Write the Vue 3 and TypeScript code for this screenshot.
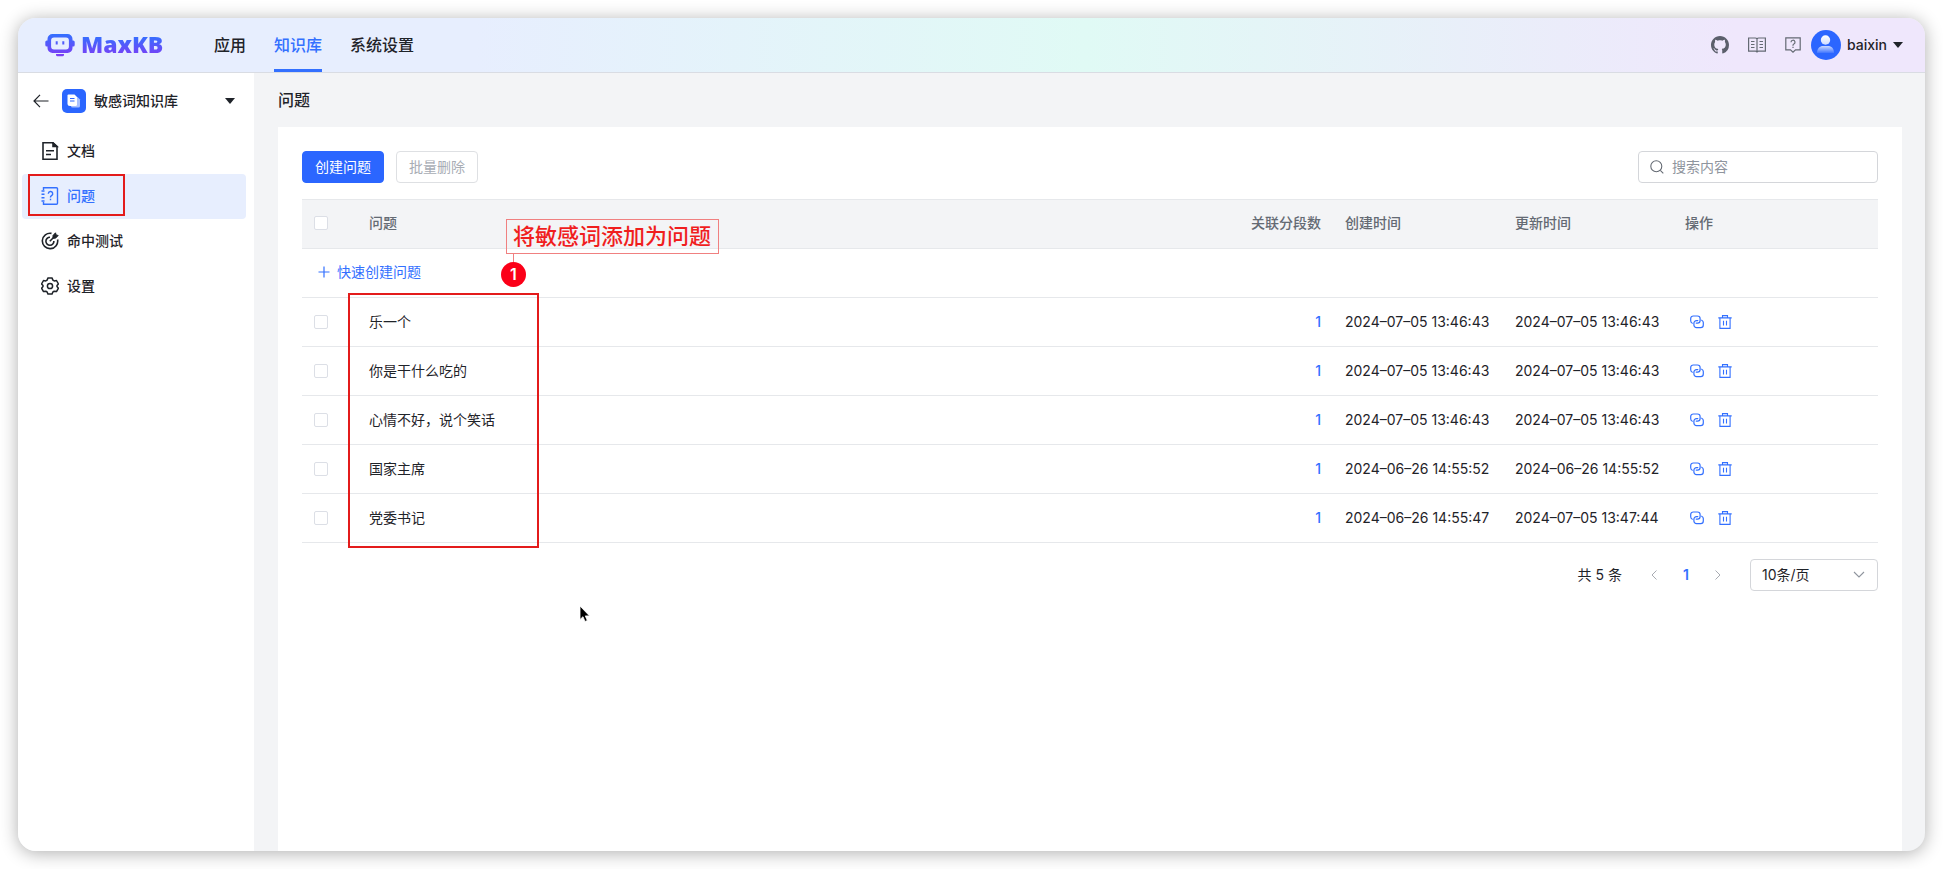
<script setup lang="ts">
import { ref } from 'vue'

interface Question {
  id: number
  content: string
  count: number
  created: string
  updated: string
}

const topMenu = ['应用', '知识库', '系统设置']
const activeTop = '知识库'

const sideMenu = [
  { key: 'doc', label: '文档' },
  { key: 'problem', label: '问题' },
  { key: 'hit', label: '命中测试' },
  { key: 'setting', label: '设置' },
]
const activeSide = 'problem'

const keyword = ref('')
const pageSize = ref(10)
const checked = ref<number[]>([])

const questions: Question[] = [
  { id: 1, content: '乐一个', count: 1, created: '2024–07–05 13:46:43', updated: '2024–07–05 13:46:43' },
  { id: 2, content: '你是干什么吃的', count: 1, created: '2024–07–05 13:46:43', updated: '2024–07–05 13:46:43' },
  { id: 3, content: '心情不好，说个笑话', count: 1, created: '2024–07–05 13:46:43', updated: '2024–07–05 13:46:43' },
  { id: 4, content: '国家主席', count: 1, created: '2024–06–26 14:55:52', updated: '2024–06–26 14:55:52' },
  { id: 5, content: '党委书记', count: 1, created: '2024–06–26 14:55:47', updated: '2024–07–05 13:47:44' },
]
</script>

<template>
  <div class="stage">
    <div class="window">
      <header class="topbar">
        <a class="logo" href="#">
          <svg width="30" height="23" viewBox="0 0 30 23" aria-hidden="true">
            <defs>
              <linearGradient id="brand" x1="0" y1="0" x2="0" y2="1">
                <stop offset="0" stop-color="#3370ff" />
                <stop offset="1" stop-color="#7f3bf5" />
              </linearGradient>
            </defs>
            <path
              fill="url(#brand)"
              fill-rule="evenodd"
              d="M7.500 0h15A5 5 0 0 1 27.500 5v1.500h.7a1.500 1.500 0 0 1 1.500 1.500v3a1.500 1.500 0 0 1-1.500 1.500h-.7V14a5 5 0 0 1-5 5h-15a5 5 0 0 1-5-5v-1.500h-.7A1.500 1.500 0 0 1 .3 11V8a1.500 1.500 0 0 1 1.500-1.500h.7V5a5 5 0 0 1 5-5zM9 3.600A2.900 2.900 0 0 0 6.100 6.500v6A2.900 2.900 0 0 0 9 15.400h12a2.900 2.900 0 0 0 2.900-2.900v-6A2.900 2.900 0 0 0 21 3.600zM10.700 7.200h2v3.400h-2zM17.300 7.200h2v3.400h-2zM11 20h8v.8a1.500 1.500 0 0 1-1.500 1.500h-5a1.500 1.500 0 0 1-1.500-1.500z"
            />
          </svg>
          <span>MaxKB</span>
        </a>
        <nav class="top-nav">
          <a v-for="m in topMenu" :key="m" href="#" :class="{ active: m === activeTop }">{{ m }}</a>
        </nav>
        <div class="tools">
          <button type="button" aria-label="GitHub">
            <svg width="18" height="18" viewBox="0 0 16 16" fill="#5b5f6b">
              <path
                d="M8 0C3.580 0 0 3.580 0 8c0 3.540 2.290 6.530 5.470 7.590.4.070.55-.17.55-.38 0-.19-.01-.82-.01-1.490-2.010.37-2.530-.49-2.690-.94-.09-.23-.48-.94-.82-1.130-.28-.15-.68-.52-.01-.53.63-.01 1.080.58 1.230.82.72 1.210 1.870.87 2.330.66.070-.52.28-.87.51-1.070-1.780-.2-3.640-.89-3.640-3.950 0-.87.31-1.590.82-2.150-.08-.2-.36-1.020.08-2.120 0 0 .67-.21 2.200.82.64-.18 1.320-.27 2-.27s1.360.09 2 .27c1.530-1.040 2.200-.82 2.200-.82.44 1.100.16 1.920.08 2.120.51.56.82 1.270.82 2.150 0 3.070-1.870 3.750-3.650 3.950.29.25.54.73.54 1.480 0 1.070-.01 1.930-.01 2.200 0 .21.15.46.55.38A8.010 8.010 0 0 0 16 8c0-4.420-3.580-8-8-8z"
              />
            </svg>
          </button>
          <button type="button" aria-label="使用手册">
            <svg width="20" height="16" viewBox="0 0 20 16" fill="none" stroke="#646a73" stroke-width="1.200">
              <path d="M10 1.800C9.600 1.200 9 1 8.300 1H1.600v13.200h6.900c.7 0 1.200.3 1.500.7.3-.4.8-.7 1.500-.7h6.900V1h-6.700c-.7 0-1.300.2-1.700.8zM10 2v12.500M4 4.500h3.500M4 7.500h3.500M4 10.500h3.500M12.500 4.500H16M12.500 7.500H16M12.500 10.500H16" />
            </svg>
          </button>
          <button type="button" aria-label="帮助">
            <svg width="16" height="16" viewBox="0 0 16 16" fill="none" stroke="#646a73" stroke-width="1.200">
              <path d="M.8.800h14.400v12h-4.700L8 15.200l-2.500-2.400H.8z" />
              <path d="M6 5.200a2 2 0 1 1 2.900 1.800c-.6.3-.9.700-.9 1.300v.4M8 9.700V11" />
            </svg>
          </button>
        </div>
        <button type="button" class="user">
          <svg width="30" height="30" viewBox="0 0 30 30" aria-hidden="true">
            <defs>
              <linearGradient id="body" x1="0" y1="0" x2="0" y2="1">
                <stop offset="0" stop-color="#fff" stop-opacity=".75" />
                <stop offset="1" stop-color="#fff" stop-opacity=".1" />
              </linearGradient>
              <linearGradient id="head" x1="0" y1="0" x2="0" y2="1">
                <stop offset="0" stop-color="#fff" />
                <stop offset="1" stop-color="#cfdcff" />
              </linearGradient>
            </defs>
            <circle cx="15" cy="15" r="15" fill="#2b66ff" />
            <circle cx="14.500" cy="10" r="4.700" fill="url(#head)" />
            <path d="M6 23c0-4.500 3-7 6-7h5c3.500 0 6 2.500 6 7z" fill="url(#body)" />
          </svg>
          <span>baixin</span>
          <i class="caret"></i>
        </button>
      </header>

      <div class="body">
        <aside class="sidebar">
          <div class="kb">
            <button type="button" class="back" aria-label="返回">
              <svg width="16" height="14" viewBox="0 0 16 14" fill="none" stroke="#1f2329" stroke-width="1.200">
                <path d="M15.500 7H1M7 .8 1 7l6 6.200" />
              </svg>
            </button>
            <button type="button" class="kb-select">
              <svg width="24" height="24" viewBox="0 0 24 24" aria-hidden="true">
                <rect width="24" height="24" rx="5" fill="#2b66ff" />
                <path d="M12 8h3.500L18 10.500V17a1.500 1.500 0 0 1-1.500 1.500h-6A1.500 1.500 0 0 1 9 17z" fill="#a9c1ff" />
                <path d="M6.500 5.500h6L15 8v7.500a1.500 1.500 0 0 1-1.500 1.500H8a2.500 2.500 0 0 1-2.500-2.500v-8a1 1 0 0 1 1-1z" fill="#fff" />
                <path d="M8 9.500h4.500M8 12h4.500" stroke="#2b66ff" />
              </svg>
              <span>敏感词知识库</span>
              <i class="caret"></i>
            </button>
          </div>
          <nav class="side-nav">
            <a v-for="m in sideMenu" :key="m.key" href="#" :class="{ active: m.key === activeSide }">
              <svg v-if="m.key === 'doc'" width="18" height="18" viewBox="0 0 18 18" fill="none" stroke="currentColor" stroke-width="1.600">
                <path d="M2 .8h9.800L16 4.500v12.700H2zM5 8.800h8M5 12.500h5" />
                <path d="M12 .8v3.700h4z" fill="currentColor" />
              </svg>
              <svg v-else-if="m.key === 'problem'" width="18" height="18" viewBox="0 0 18 18" fill="none" stroke="currentColor" stroke-width="1.400">
                <path d="M2.500 3V.8h13a1 1 0 0 1 1 1v14.400a1 1 0 0 1-1 1h-13V15M.5 4h3M.5 7.300h3M.5 10.700h3M.5 14h3" />
                <path d="M7.300 6.700a2.200 2.200 0 1 1 3.200 2c-.7.4-1 .7-1 1.400v.4M9.500 11.700v1.500" />
              </svg>
              <svg v-else-if="m.key === 'hit'" width="18" height="18" viewBox="0 0 18 18" fill="none" stroke="currentColor" stroke-width="1.600">
                <path d="M10.500 1.400A7.700 7.700 0 1 0 16.600 7.500" />
                <path d="M9 5.200A4 4 0 1 0 12.900 9M8.800 9.200l4-4" />
                <path d="m12 3.500 2.500-2.700.6 2.100 2.100.6-2.700 2.700h-2.500z" fill="currentColor" stroke-width="1" />
              </svg>
              <svg v-else width="18" height="18" viewBox="0 0 18 18" fill="none" stroke="currentColor" stroke-width="1.500" stroke-linejoin="round">
                <path d="M7 .9h4l.9 2.200 1.300.8 2.300-.4 1.900 3.400L16 8.600v.9l1.400 1.700-1.900 3.400-2.300-.4-1.300.8-.9 2.100H7l-.9-2.100-1.300-.8-2.300.4-1.900-3.400L2 9.500v-.9L.6 6.900l1.900-3.400 2.300.4 1.300-.8z" />
                <circle cx="9" cy="9" r="2.600" />
              </svg>
              <span>{{ m.label }}</span>
              <b v-if="m.key === activeSide" class="mark"></b>
            </a>
          </nav>
        </aside>

        <main class="main">
          <h1>问题</h1>
          <section class="card">
            <div class="toolbar">
              <button type="button" class="btn primary">创建问题</button>
              <button type="button" class="btn" disabled>批量删除</button>
              <label class="search">
                <svg width="14" height="14" viewBox="0 0 14 14" fill="none" stroke="#646a73" stroke-width="1.100">
                  <circle cx="6.300" cy="6.300" r="5.500" />
                  <path d="m10.300 10.300 3 3" />
                </svg>
                <input v-model="keyword" type="text" placeholder="搜索内容" aria-label="搜索内容" />
              </label>
            </div>

            <div class="table-wrap">
              <table>
                <colgroup>
                  <col class="c-check" />
                  <col />
                  <col class="c-count" />
                  <col class="c-time" />
                  <col class="c-time" />
                  <col class="c-ops" />
                </colgroup>
                <thead>
                  <tr>
                    <th><input type="checkbox" aria-label="全选" /></th>
                    <th>问题</th>
                    <th class="right">关联分段数</th>
                    <th>创建时间</th>
                    <th>更新时间</th>
                    <th>操作</th>
                  </tr>
                </thead>
                <tbody>
                  <tr>
                    <td colspan="6">
                      <button type="button" class="quick">
                        <svg width="12" height="12" viewBox="0 0 12 12" stroke="currentColor" stroke-width="1.200">
                          <path d="M6 .5v11M.5 6h11" />
                        </svg>
                        快速创建问题
                      </button>
                    </td>
                  </tr>
                  <tr v-for="q in questions" :key="q.id">
                    <td><input v-model="checked" type="checkbox" :value="q.id" :aria-label="q.content" /></td>
                    <td>{{ q.content }}</td>
                    <td class="right"><a href="#" class="count">{{ q.count }}</a></td>
                    <td>{{ q.created }}</td>
                    <td>{{ q.updated }}</td>
                    <td>
                      <div class="ops">
                        <button type="button" aria-label="关联分段">
                          <svg width="14" height="14" viewBox="0 0 14 14" fill="none" stroke="currentColor" stroke-width="1.200" stroke-linecap="round">
                            <path d="M2.300 8.200A2.600 2.600 0 0 1 .7 5.800V3.600A2.600 2.600 0 0 1 3.300 1h4.200a2.600 2.600 0 0 1 2.600 2.600v1.900a2.600 2.600 0 0 1-2.600 2.600H6.200" />
                            <path d="M11.700 5.200a2.600 2.600 0 0 1 1.600 2.400v2.500a2.600 2.600 0 0 1-2.600 2.600H6.500a2.600 2.600 0 0 1-2.600-2.600V8.200a2.600 2.600 0 0 1 2.600-2.600h1.300" />
                          </svg>
                        </button>
                        <button type="button" aria-label="删除">
                          <svg width="14" height="14" viewBox="0 0 14 14" fill="none" stroke="currentColor" stroke-width="1.100">
                            <path d="M.3 2.900h13.400M4.500 2.700V.6h5v2.100M1.900 3v10.400h10.200V3M5.500 5.800v4.700M8.500 5.800v4.700" />
                          </svg>
                        </button>
                      </div>
                    </td>
                  </tr>
                </tbody>
              </table>
              <div class="frame"></div>
              <div class="note">将敏感词添加为问题</div>
              <div class="stem"></div>
              <div class="step">1</div>
              <svg class="pointer" width="12" height="18" viewBox="0 0 12 18">
                <path d="M1 1v13.500l3-2.800 2 4.800 2.300-1-2-4.600h4.200z" fill="#000" stroke="#fff" stroke-width=".8" />
              </svg>
            </div>

            <div class="pager">
              <span>共 5 条</span>
              <div class="pages">
                <button type="button" aria-label="上一页" disabled>
                  <svg width="6" height="10" viewBox="0 0 6 10" fill="none" stroke="currentColor"><path d="M5.500.5 1 5l4.500 4.500" /></svg>
                </button>
                <button type="button" class="current">1</button>
                <button type="button" aria-label="下一页" disabled>
                  <svg width="6" height="10" viewBox="0 0 6 10" fill="none" stroke="currentColor"><path d="M.5.5 5 5 .5 9.500" /></svg>
                </button>
              </div>
              <label class="size">
                <select v-model="pageSize" aria-label="每页条数">
                  <option :value="10">10条/页</option>
                  <option :value="20">20条/页</option>
                  <option :value="50">50条/页</option>
                </select>
                <svg width="12" height="8" viewBox="0 0 12 8" fill="none" stroke="#8f959e" stroke-width="1.100"><path d="m1 1 5 5 5-5" /></svg>
              </label>
            </div>
          </section>
        </main>
      </div>
    </div>
  </div>
</template>

<style>
body {
  margin: 0;
  background: #fff;
}
</style>

<style scoped>
* {
  box-sizing: border-box;
}
.stage {
  display: flex;
  height: 100vh;
  padding: 18px;
  font: 14px/22px Inter, 'Noto Sans CJK SC', sans-serif;
  color: #1f2329;
}
button,
input,
select {
  font: inherit;
  color: inherit;
}
button {
  padding: 0;
  border: 0;
  background: none;
}
a {
  color: inherit;
  text-decoration: none;
}
svg {
  display: block;
  flex: none;
}
.window {
  flex: 1;
  display: flex;
  flex-direction: column;
  overflow: hidden;
  border-radius: 18px;
  background: #f3f4f6;
  box-shadow: 0 2px 18px rgba(0, 0, 0, 0.32);
}
.topbar {
  display: flex;
  align-items: stretch;
  height: 55px;
  padding: 0 22px 0 27px;
  border-bottom: 1px solid #d9dce3;
  background: linear-gradient(90deg, #e7eefe 24%, #e0faf5 56%, #efe7fc 90%);
}
.logo {
  display: flex;
  align-items: center;
  gap: 6px;
  width: 169px;
}
.logo span {
  padding-bottom: 2px;
  font: 800 23px/28px 'Open Sans', sans-serif;
  background: linear-gradient(#3370ff 20%, #7f3bf5 90%);
  background-clip: text;
  color: transparent;
}
.top-nav {
  display: flex;
  gap: 28px;
  flex: 1;
  font-size: 16px;
  font-weight: 500;
}
.top-nav a {
  display: flex;
  align-items: center;
  border-bottom: 3px solid transparent;
  border-top: 3px solid transparent;
}
.top-nav .active {
  color: #3370ff;
  border-bottom-color: #3370ff;
}
.tools {
  display: flex;
  align-items: center;
  gap: 18px;
  margin-right: 10px;
}
.user {
  display: flex;
  align-items: center;
  gap: 6px;
  font-weight: 500;
}
.caret {
  border: 5px solid transparent;
  border-top: 6px solid #1f2329;
  border-bottom: 0;
}
.body {
  display: flex;
  flex: 1;
}
.sidebar {
  width: 236px;
  padding: 16px 8px 0 4px;
  background: #fff;
}
.kb {
  display: flex;
  align-items: center;
  gap: 13px;
  padding: 0 11px;
  font-weight: 500;
}
.kb-select {
  display: flex;
  align-items: center;
  gap: 8px;
  flex: 1;
}
.kb-select .caret {
  margin-left: auto;
}
.side-nav {
  margin-top: 16px;
  font-weight: 500;
}
.side-nav a {
  position: relative;
  display: flex;
  align-items: center;
  gap: 8px;
  height: 45px;
  padding: 0 0 2px 19px;
  border-radius: 4px;
}
.side-nav .active {
  color: #3370ff;
  background: #e7eefe;
}
.mark {
  position: absolute;
  left: 6px;
  top: 0;
  width: 97px;
  height: 42px;
  border: 2px solid #e31b1b;
}
.main {
  flex: 1;
  display: flex;
  flex-direction: column;
  padding: 0 23px 0 24px;
}
h1 {
  margin: 15px 0;
  font-size: 16px;
  line-height: 24px;
  font-weight: 500;
}
.card {
  flex: 1;
  padding: 24px;
  background: #fff;
}
.toolbar {
  display: flex;
  gap: 12px;
  margin-bottom: 16px;
}
.btn {
  width: 82px;
  height: 32px;
  border: 1px solid #dee0e3;
  border-radius: 4px;
  color: #a8adb5;
  background: #fff;
}
.btn.primary {
  border-color: #2b66ff;
  color: #fff;
  background: #2b66ff;
}
.search {
  display: flex;
  align-items: center;
  gap: 8px;
  width: 240px;
  height: 32px;
  margin-left: auto;
  padding: 0 11px;
  border: 1px solid #d4d6da;
  border-radius: 4px;
}
.search input {
  flex: 1;
  min-width: 0;
  padding: 0;
  border: 0;
  outline: 0;
  background: none;
}
.search input::placeholder {
  color: #8f959e;
}
.table-wrap {
  position: relative;
}
table {
  width: 100%;
  table-layout: fixed;
  border-collapse: separate;
  border-spacing: 0;
}
.c-check {
  width: 55px;
}
.c-count {
  width: 100px;
}
.c-time {
  width: 170px;
}
.c-ops {
  width: 205px;
}
th,
td {
  height: 49px;
  padding: 0 12px;
  border-bottom: 1px solid #e6e8eb;
  text-align: left;
  white-space: nowrap;
}
th {
  height: 50px;
  padding-bottom: 2px;
  border-top: 1px solid #e6e8eb;
  font-weight: 500;
  color: #646a73;
  background: #f3f4f6;
}
.right {
  text-align: right;
}
input[type='checkbox'] {
  display: block;
  appearance: none;
  width: 14px;
  height: 14px;
  margin: 0;
  border: 1px solid #dcdfe6;
  border-radius: 2px;
  background: #fff;
}
.quick {
  display: flex;
  align-items: center;
  gap: 7px;
  padding: 0 0 2px 4px;
  color: #3370ff;
}
.count {
  font-weight: 500;
  color: #3370ff;
}
.ops {
  display: flex;
  gap: 14px;
  padding-left: 5px;
  color: #3370ff;
}
.frame {
  position: absolute;
  left: 46px;
  top: 94px;
  width: 191px;
  height: 255px;
  border: 2px solid #e31b1b;
}
.note {
  position: absolute;
  left: 204px;
  top: 20px;
  padding: 0 7px 1px 6px;
  border: 1px solid #f08080;
  font-size: 22px;
  line-height: 32px;
  font-weight: 500;
  white-space: nowrap;
  color: #f01e1e;
}
.stem {
  position: absolute;
  left: 211px;
  top: 55px;
  width: 1px;
  height: 12px;
  background: #f08080;
}
.step {
  position: absolute;
  left: 199px;
  top: 63px;
  width: 25px;
  height: 25px;
  border-radius: 50%;
  font-size: 16px;
  line-height: 24px;
  font-weight: 600;
  text-align: center;
  color: #fff;
  background: #fb0018;
}
.pointer {
  position: absolute;
  left: 277px;
  top: 406px;
}
.pager {
  display: flex;
  align-items: center;
  justify-content: flex-end;
  margin-top: 16px;
}
.pages {
  display: flex;
  margin: 0 16px;
}
.pages button {
  display: flex;
  align-items: center;
  justify-content: center;
  width: 32px;
  height: 32px;
  color: #a8abb2;
}
.pages .current {
  font-weight: 600;
  color: #3370ff;
}
.size {
  position: relative;
  display: flex;
  align-items: center;
}
.size select {
  appearance: none;
  width: 128px;
  height: 32px;
  padding: 0 11px;
  border: 1px solid #d4d6da;
  border-radius: 4px;
  background: #fff;
}
.size svg {
  position: absolute;
  right: 13px;
  pointer-events: none;
}
</style>
